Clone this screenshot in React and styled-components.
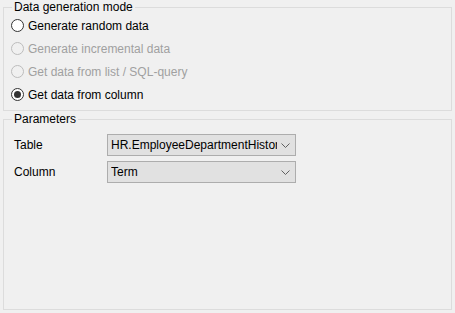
import styled, { createGlobalStyle } from 'styled-components';

const GlobalStyle = createGlobalStyle`
  html, body {
    margin: 0;
    padding: 0;
    background: #f0f0f0;
  }
  body {
    font-family: "Liberation Sans", Arial, sans-serif;
    font-size: 12px;
    color: #000;
  }
`;

const Page = styled.div`
  display: flex;
  flex-direction: column;
  gap: 1px;
  height: 313px;
  box-sizing: border-box;
  padding: 0 3px 3px 3px;
`;

const Group = styled.fieldset`
  margin: 0;
  padding: 0 0 ${(props) => props.$bottom || 0}px 0;
  border: 1px solid #dcdcdc;
  min-width: 0;
  flex: ${(props) => (props.$grow ? 1 : 'none')};
`;

const Legend = styled.legend`
  margin-left: 8px;
  padding: 0 2px;
  line-height: 14px;
`;

const RadioRow = styled.label`
  display: flex;
  align-items: center;
  gap: 4px;
  height: 23px;
  padding-left: 7px;
  color: ${(props) => (props.$disabled ? '#a0a0a0' : '#000')};
`;

const ParamList = styled.div`
  display: flex;
  flex-direction: column;
  gap: 5px;
  padding-top: 8px;
`;

const ParamRow = styled.div`
  display: flex;
  align-items: center;
`;

const ParamLabel = styled.span`
  width: 93px;
  padding-left: 10px;
`;

const Combo = styled.div`
  display: flex;
  align-items: center;
  width: 189px;
  height: 22px;
  box-sizing: border-box;
  border: 1px solid #adadad;
  background: #e1e1e1;
  padding: 0 3px 0 3px;
`;

const ComboText = styled.span`
  flex: 1;
  overflow: hidden;
  white-space: nowrap;
`;

const Chevron = styled.svg`
  width: 9px;
  height: 5px;
  margin: 0 2px 0 4px;
  flex: none;
`;

function RadioIcon({ checked, disabled }) {
  const stroke = disabled ? '#bcbcbc' : '#333';
  return (
    <svg width="13" height="13" viewBox="0 0 13 13">
      <circle cx="6.5" cy="6.5" r="6" fill={disabled ? '#f0f0f0' : '#fff'} stroke={stroke} />
      {checked && <circle cx="6.5" cy="6.5" r="3.5" fill="#333" />}
    </svg>
  );
}

function Radio({ label, checked, disabled }) {
  return (
    <RadioRow $disabled={disabled}>
      <RadioIcon checked={checked} disabled={disabled} />
      {label}
    </RadioRow>
  );
}

function ComboBox({ value }) {
  return (
    <Combo>
      <ComboText>{value}</ComboText>
      <Chevron viewBox="0 0 9 5">
        <path d="M0.5 0.5 L4.5 4.5 L8.5 0.5" fill="none" stroke="#606060" />
      </Chevron>
    </Combo>
  );
}

export default function App() {
  return (
    <>
      <GlobalStyle />
      <Page>
        <Group $bottom={4}>
          <Legend>Data generation mode</Legend>
          <Radio label="Generate random data" />
          <Radio label="Generate incremental data" disabled />
          <Radio label="Get data from list / SQL-query" disabled />
          <Radio label="Get data from column" checked />
        </Group>
        <Group $grow>
          <Legend>Parameters</Legend>
          <ParamList>
            <ParamRow>
              <ParamLabel>Table</ParamLabel>
              <ComboBox value="HR.EmployeeDepartmentHistory" />
            </ParamRow>
            <ParamRow>
              <ParamLabel>Column</ParamLabel>
              <ComboBox value="Term" />
            </ParamRow>
          </ParamList>
        </Group>
      </Page>
    </>
  );
}
